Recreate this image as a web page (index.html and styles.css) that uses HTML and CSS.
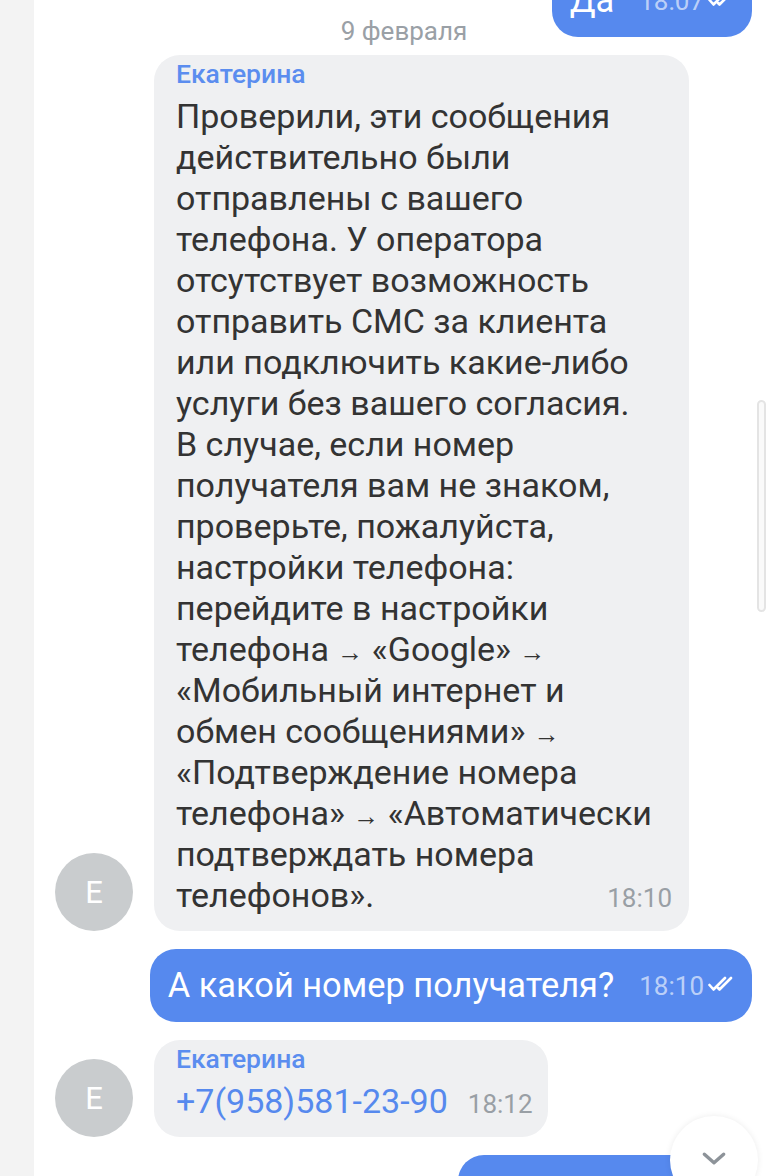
FILE: index.html
```html
<!DOCTYPE html>
<html lang="ru">
<head>
<meta charset="utf-8">
<title>Чат</title>
<link rel="stylesheet" href="styles.css">
</head>
<body>
<div class="page">
  <div class="gutter"></div>
  <div class="chat">
    <div class="date">9 февраля</div>
    <div class="list">
      <div class="row out">
        <div class="bubble blue">
          <span class="text">Да</span>
          <span class="time">18:07</span>
          <svg class="ticks" viewBox="0 0 28 16" width="28" height="16"><path d="M1.5 9 L5.5 13.5 L17 2 M10 12 L11.5 13.5 L23 2" fill="none" stroke="#fff" stroke-width="2.6" stroke-linecap="round" stroke-linejoin="round"/></svg>
        </div>
      </div>

      <div class="row in">
        <div class="avatar">Е</div>
        <div class="bubble gray wide">
          <div class="name">Екатерина</div>
          <div class="body">Проверили, эти сообщения<br>действительно были<br>отправлены с вашего<br>телефона. У оператора<br>отсутствует возможность<br>отправить СМС за клиента<br>или подключить какие-либо<br>услуги без вашего согласия.<br>В случае, если номер<br>получателя вам не знаком,<br>проверьте, пожалуйста,<br>настройки телефона:<br>перейдите в настройки<br>телефона <span class="arr">→</span> «Google» <span class="arr">→</span><br>«Мобильный интернет и<br>обмен сообщениями» <span class="arr">→</span><br>«Подтверждение номера<br>телефона» <span class="arr">→</span> «Автоматически<br>подтверждать номера</div>
          <div class="last">
            <span class="body">телефонов».</span>
            <span class="time">18:10</span>
          </div>
        </div>
      </div>

      <div class="row out">
        <div class="bubble blue">
          <span class="text">А какой номер получателя?</span>
          <span class="time">18:10</span>
          <svg class="ticks" viewBox="0 0 28 16" width="28" height="16"><path d="M1.5 9 L5.5 13.5 L17 2 M10 12 L11.5 13.5 L23 2" fill="none" stroke="#fff" stroke-width="2.6" stroke-linecap="round" stroke-linejoin="round"/></svg>
        </div>
      </div>

      <div class="row in">
        <div class="avatar">Е</div>
        <div class="bubble gray short">
          <div class="name">Екатерина</div>
          <div class="last">
            <span class="body phone">+7(958)581-23-90</span>
            <span class="time">18:12</span>
          </div>
        </div>
      </div>

      <div class="row out">
        <div class="bubble blue stub"></div>
      </div>
    </div>

    <div class="scrollbar"></div>
    <div class="down">
      <svg viewBox="0 0 24 14" width="26" height="15"><path d="M3 3 L12 11 L21 3" fill="none" stroke="#8d9399" stroke-width="3.2" stroke-linecap="round" stroke-linejoin="round"/></svg>
    </div>
  </div>
</div>
</body>
</html>
```

FILE: styles.css
```css
* { box-sizing: border-box; }

html, body {
  margin: 0;
  padding: 0;
  background: #ffffff;
}

body {
  width: 768px;
  height: 1176px;
  overflow: hidden;
  font-family: Roboto, "Noto Sans", sans-serif;
  color: #333333;
}

.page {
  display: flex;
  height: 1176px;
}

.gutter {
  width: 34px;
  flex: 0 0 34px;
  background: #f3f3f3;
}

.chat {
  flex: 1;
  position: relative;
  overflow: hidden;
}

.date {
  position: absolute;
  top: 15px;
  left: 0;
  right: 0;
  text-align: center;
  font-size: 26px;
  line-height: 32px;
  color: #9aa0a6;
  padding-left: 6px;
}

.list {
  display: flex;
  flex-direction: column;
  gap: 18px;
  margin-top: -36px;
  padding-right: 16px;
}

.row {
  display: flex;
}

.row.out {
  justify-content: flex-end;
}

.row.in {
  align-items: flex-end;
  padding-left: 21px;
}

.avatar {
  width: 78px;
  height: 78px;
  flex: 0 0 78px;
  border-radius: 50%;
  background: #c9ccce;
  color: #ffffff;
  font-size: 31px;
  display: flex;
  align-items: center;
  justify-content: center;
  margin-right: 21px;
}

.bubble {
  border-radius: 26px;
}

.bubble.blue {
  background: #5689ee;
  color: #ffffff;
  display: flex;
  align-items: center;
  height: 73px;
  padding: 0 16px 0 18px;
}

.bubble.blue .text {
  font-size: 34.4px;
  line-height: 41px;
}

.bubble.blue .time {
  font-size: 26px;
  color: rgba(255, 255, 255, 0.62);
  margin-left: 25px;
  margin-right: 4px;
}

.ticks {
  display: block;
  margin-top: -3px;
}

.bubble.stub {
  width: 294px;
}

.bubble.gray {
  background: #eff0f2;
  padding: 5px 17px 15px 22px;
}

.bubble.wide {
  width: 535px;
}

.bubble.short {
  padding-bottom: 15px;
  padding-right: 15px;
}

.name {
  font-size: 26.5px;
  line-height: 28px;
  font-weight: 500;
  color: #5b8def;
  margin-bottom: 8px;
}

.body {
  font-size: 34px;
  line-height: 41px;
  color: #333333;
}

.arr {
  font-size: 26px;
  line-height: 0;
}

.last {
  display: flex;
  justify-content: space-between;
  align-items: baseline;
}

.gray .time {
  font-size: 26px;
  color: #999fa5;
}

.phone {
  color: #5689ee;
  margin-right: 20px;
}

.scrollbar {
  position: absolute;
  left: 723px;
  top: 400px;
  width: 9px;
  height: 212px;
  border: 2px solid #e4e4e4;
  border-radius: 5px;
  background: #fafafa;
}

.down {
  position: absolute;
  left: 636px;
  top: 1116px;
  width: 88px;
  height: 88px;
  border-radius: 50%;
  background: #ffffff;
  box-shadow: 0 0 6px rgba(0, 0, 0, 0.08);
  display: flex;
  justify-content: center;
  padding-top: 35px;
}

.down svg {
  display: block;
}
```
